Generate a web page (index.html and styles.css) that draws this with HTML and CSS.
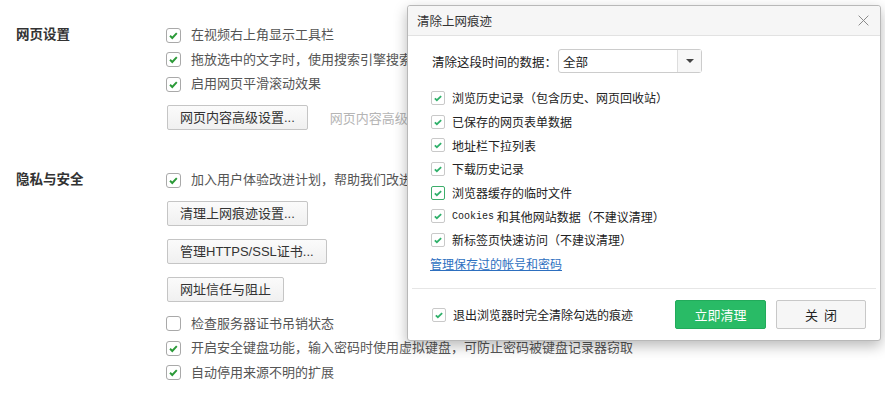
FILE: index.html
```html
<!DOCTYPE html>
<html lang="zh-CN">
<head>
  <meta charset="UTF-8">
  <title>设置</title>
  <link rel="stylesheet" href="styles.css">
</head>
<body>
  <div class="page">
    <section class="section first">
      <h3 class="section-title">网页设置</h3>
      <div class="section-body">
        <label class="opt"><span class="box on"><svg viewBox="0 0 15 15"><path d="M3.5 7.8l2.6 2.6 5.2-5.6"/></svg></span>在视频右上角显示工具栏</label>
        <label class="opt"><span class="box on"><svg viewBox="0 0 15 15"><path d="M3.5 7.8l2.6 2.6 5.2-5.6"/></svg></span>拖放选中的文字时，使用搜索引擎搜索</label>
        <label class="opt"><span class="box on"><svg viewBox="0 0 15 15"><path d="M3.5 7.8l2.6 2.6 5.2-5.6"/></svg></span>启用网页平滑滚动效果</label>
        <div class="btn-line">
          <button class="btn">网页内容高级设置...</button>
          <span class="hint">网页内容高级</span>
        </div>
      </div>
    </section>

    <section class="section second">
      <h3 class="section-title">隐私与安全</h3>
      <div class="section-body">
        <label class="opt"><span class="box on"><svg viewBox="0 0 15 15"><path d="M3.5 7.8l2.6 2.6 5.2-5.6"/></svg></span>加入用户体验改进计划，帮助我们改进</label>
        <button class="btn">清理上网痕迹设置...</button>
        <button class="btn">管理HTTPS/SSL证书...</button>
        <button class="btn">网址信任与阻止</button>
        <label class="opt"><span class="box"></span>检查服务器证书吊销状态</label>
        <label class="opt"><span class="box on"><svg viewBox="0 0 15 15"><path d="M3.5 7.8l2.6 2.6 5.2-5.6"/></svg></span>开启安全键盘功能，输入密码时使用虚拟键盘，可防止密码被键盘记录器窃取</label>
        <label class="opt"><span class="box on"><svg viewBox="0 0 15 15"><path d="M3.5 7.8l2.6 2.6 5.2-5.6"/></svg></span>自动停用来源不明的扩展</label>
      </div>
    </section>
  </div>

  <div class="dialog">
    <div class="dialog-head">
      <span class="dialog-title">清除上网痕迹</span>
      <svg class="close" viewBox="0 0 16 16"><path d="M2 2l12 12M14 2L2 14"/></svg>
    </div>
    <div class="dialog-body">
      <div class="range">
        <span class="range-label">清除这段时间的数据：</span>
        <div class="select">
          <span class="select-value">全部</span>
          <span class="select-arrow"><i></i></span>
        </div>
      </div>
      <ul class="items">
        <li><span class="mini"><svg viewBox="0 0 14 14"><path d="M3.3 7.3l2.4 2.3 5-4.8"/></svg></span>浏览历史记录（包含历史、网页回收站）</li>
        <li><span class="mini"><svg viewBox="0 0 14 14"><path d="M3.3 7.3l2.4 2.3 5-4.8"/></svg></span>已保存的网页表单数据</li>
        <li><span class="mini"><svg viewBox="0 0 14 14"><path d="M3.3 7.3l2.4 2.3 5-4.8"/></svg></span>地址栏下拉列表</li>
        <li><span class="mini"><svg viewBox="0 0 14 14"><path d="M3.3 7.3l2.4 2.3 5-4.8"/></svg></span>下载历史记录</li>
        <li><span class="mini focus"><svg viewBox="0 0 14 14"><path d="M3.3 7.3l2.4 2.3 5-4.8"/></svg></span>浏览器缓存的临时文件</li>
        <li><span class="mini"><svg viewBox="0 0 14 14"><path d="M3.3 7.3l2.4 2.3 5-4.8"/></svg></span><span class="mono">Cookies</span>&nbsp;和其他网站数据（不建议清理）</li>
        <li><span class="mini"><svg viewBox="0 0 14 14"><path d="M3.3 7.3l2.4 2.3 5-4.8"/></svg></span>新标签页快速访问（不建议清理）</li>
      </ul>
      <a class="manage" href="#">管理保存过的帐号和密码</a>
    </div>
    <div class="dialog-foot">
      <label class="foot-opt"><span class="mini"><svg viewBox="0 0 14 14"><path d="M3.3 7.3l2.4 2.3 5-4.8"/></svg></span>退出浏览器时完全清除勾选的痕迹</label>
      <button class="btn-green">立即清理</button>
      <button class="btn-close">关&nbsp;&nbsp;闭</button>
    </div>
  </div>
</body>
</html>
```

FILE: styles.css
```css
* {
  margin: 0;
  padding: 0;
  box-sizing: border-box;
}

html, body {
  background: #fff;
  overflow: hidden;
}

body {
  font-family: "Liberation Sans", "Noto Sans CJK SC", sans-serif;
  color: #555;
  font-size: 13px;
  width: 885px;
  height: 393px;
  position: relative;
}

.page {
  padding-left: 16px;
}

.section {
  display: flex;
}

.section.first {
  padding-top: 23px;
}

.section.second {
  padding-top: 38px;
}

.section-title {
  width: 150px;
  flex-shrink: 0;
  font-size: 13.5px;
  font-weight: bold;
  color: #333;
  line-height: 24px;
}

.section-body {
  display: flex;
  flex-direction: column;
  align-items: flex-start;
}

.opt {
  display: flex;
  align-items: center;
  height: 24.5px;
  white-space: nowrap;
  line-height: 24px;
}

.box {
  width: 15px;
  height: 15px;
  border: 1px solid #a9a9a9;
  border-radius: 3px;
  background: #fff;
  margin-right: 10px;
  display: flex;
}

.box svg {
  width: 13px;
  height: 13px;
  fill: none;
  stroke: #2b9a38;
  stroke-width: 2.2;
}

.btn {
  font-family: "Liberation Sans", "Noto Sans CJK SC", sans-serif;
  font-size: 13px;
  color: #333;
  height: 25px;
  padding: 0 12px;
  border: 1px solid #c5c5c5;
  border-radius: 2px;
  background: linear-gradient(#fbfbfb, #f0f0f0);
  margin-left: 1px;
  line-height: 23px;
}

.btn-line {
  display: flex;
  align-items: center;
  margin-top: 8.5px;
}

.hint {
  color: #b5b5b5;
  margin-left: 22px;
  white-space: nowrap;
}

.second .btn {
  margin-top: 13px;
}

.second .opt:first-child + .btn {
  margin-top: 8px;
}

.second .btn + .opt {
  margin-top: 10px;
}

/* dialog */
.dialog {
  position: absolute;
  left: 407px;
  top: 5px;
  width: 474px;
  height: 336px;
  background: #fff;
  border: 1px solid #b8b8b8;
  border-radius: 3px;
  box-shadow: 0 5px 14px rgba(0, 0, 0, 0.28);
  font-family: "Noto Sans CJK SC", sans-serif;
  font-size: 12px;
  color: #222;
  display: flex;
  flex-direction: column;
}

.dialog-head {
  height: 30px;
  background: #f6f6f6;
  border-bottom: 1px solid #e2e2e2;
  border-radius: 3px 3px 0 0;
  display: flex;
  align-items: center;
  justify-content: space-between;
  padding: 0 10px 0 9px;
}

.dialog-title {
  font-size: 12.5px;
  color: #333;
}

.close {
  width: 13px;
  height: 13px;
  fill: none;
  stroke: #888;
  stroke-width: 1.2;
}

.dialog-body {
  padding: 13px 0 0 24px;
  flex: 1;
}

.range {
  display: flex;
  align-items: center;
}

.range-label {
  font-size: 12.5px;
  width: 126px;
}

.select {
  width: 144px;
  height: 24px;
  border: 1px solid #ccc;
  border-radius: 3px;
  display: flex;
  align-items: center;
}

.select-value {
  flex: 1;
  padding-left: 4px;
  font-size: 12.5px;
}

.select-arrow {
  width: 24px;
  height: 100%;
  border-left: 1px solid #ddd;
  background: #f7f7f7;
  display: flex;
  align-items: center;
  justify-content: center;
}

.select-arrow i {
  border-left: 4px solid transparent;
  border-right: 4px solid transparent;
  border-top: 4px solid #444;
}

.items {
  list-style: none;
  margin-top: 13px;
  margin-left: -1px;
}

.items li {
  display: flex;
  align-items: center;
  height: 23.7px;
  white-space: nowrap;
}

.mini {
  width: 14px;
  height: 14px;
  border: 1px solid #c9c9c9;
  border-radius: 2px;
  margin-right: 7px;
  display: flex;
  background: #fff;
}

.mini.focus {
  border-color: #3dad6b;
}

.mini svg {
  width: 12px;
  height: 12px;
  fill: none;
  stroke: #2fb06a;
  stroke-width: 2;
}

.mono {
  font-family: "Liberation Mono", monospace;
  font-size: 10px;
}

.manage {
  display: inline-block;
  margin-left: -2px;
  margin-top: 4px;
  color: #2d6fbf;
  font-size: 12px;
  line-height: 16px;
}

.dialog-foot {
  margin: 0 4px;
  border-top: 1px solid #e6e6e6;
  height: 52px;
  display: flex;
  align-items: center;
  padding: 0 10px 0 20px;
}

.foot-opt {
  display: flex;
  align-items: center;
  flex: 1;
  font-size: 12px;
}

.btn-green {
  width: 91px;
  height: 29px;
  border: 1px solid #22ab5b;
  border-radius: 2px;
  background: #29bb66;
  color: #fff;
  font-family: "Noto Sans CJK SC", sans-serif;
  font-size: 13px;
}

.btn-close {
  width: 90px;
  height: 29px;
  margin-left: 10px;
  border: 1px solid #c8c8c8;
  border-radius: 2px;
  background: #f6f6f6;
  color: #222;
  font-family: "Noto Sans CJK SC", sans-serif;
  font-size: 13px;
}
```
